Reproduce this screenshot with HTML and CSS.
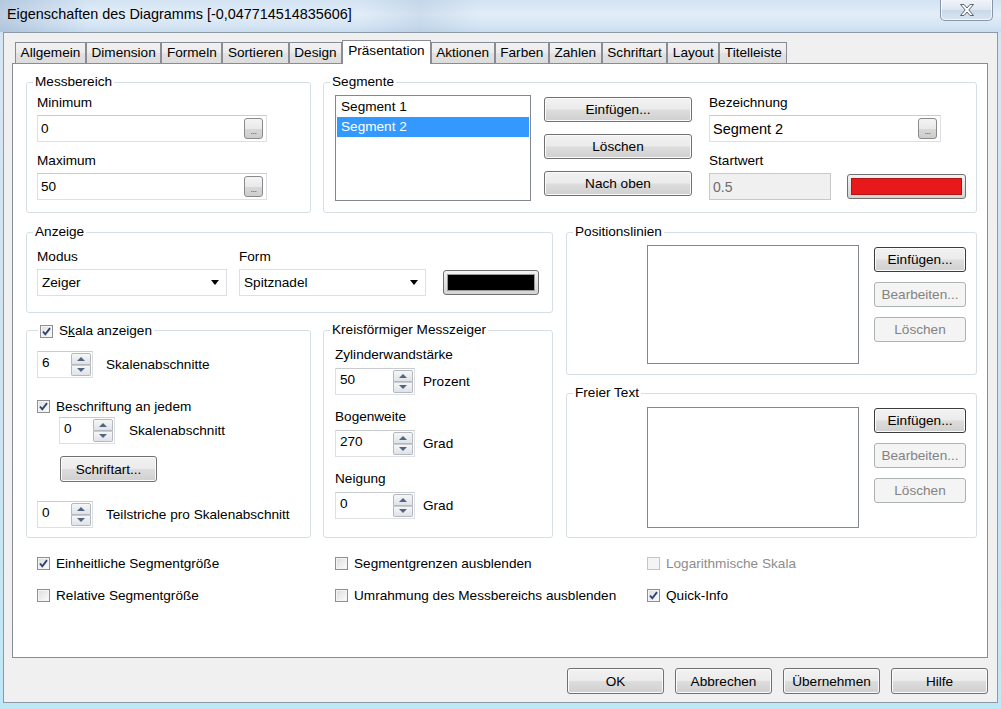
FILE: index.html
```html
<!DOCTYPE html>
<html lang="de">
<head>
<meta charset="utf-8">
<title>Eigenschaften des Diagramms</title>
<link rel="stylesheet" href="styles.css">
</head>
<body>
<div class="window">
  <div class="titlebar">
    <span class="title">Eigenschaften des Diagramms [-0,047714514835606]</span>
    <div class="close">
      <svg width="16" height="12" viewBox="0 0 16 12"><path d="M1.5 0.5 H5 L8 4 L11 0.5 H14.5 L9.8 6 L14.5 11.5 H11 L8 8 L5 11.5 H1.5 L6.2 6 Z" fill="#fff" stroke="#5a6470" stroke-width="1" stroke-linejoin="round"/></svg>
    </div>
  </div>
  <div class="dialog">
    <div class="tabs">
      <div class="tab">Allgemein</div>
      <div class="tab">Dimension</div>
      <div class="tab">Formeln</div>
      <div class="tab">Sortieren</div>
      <div class="tab">Design</div>
      <div class="tab active">Präsentation</div>
      <div class="tab">Aktionen</div>
      <div class="tab">Farben</div>
      <div class="tab">Zahlen</div>
      <div class="tab">Schriftart</div>
      <div class="tab">Layout</div>
      <div class="tab">Titelleiste</div>
    </div>
    <div class="page">
      <div class="row1">
        <div class="group g-mess">
          <div class="legend">Messbereich</div>
          <div class="lbl">Minimum</div>
          <div class="field f-mess"><span>0</span><span class="dots">...</span></div>
          <div class="lbl">Maximum</div>
          <div class="field f-mess"><span>50</span><span class="dots">...</span></div>
        </div>
        <div class="group g-seg">
          <div class="legend">Segmente</div>
          <div class="listbox lb-seg">
            <div class="item">Segment 1</div>
            <div class="item sel">Segment 2</div>
          </div>
          <div class="btncol seg-btns">
            <div class="btn">Einfügen...</div>
            <div class="btn">Löschen</div>
            <div class="btn">Nach oben</div>
          </div>
          <div class="seg-props">
            <div class="lbl">Bezeichnung</div>
            <div class="field f-bez"><span>Segment 2</span><span class="dots">...</span></div>
            <div class="lbl">Startwert</div>
            <div class="start-row">
              <div class="field f-start disabled"><span>0.5</span></div>
              <div class="colorbox red"><div class="swatch"></div></div>
            </div>
          </div>
        </div>
      </div>
      <div class="row2">
        <div class="leftcol">
          <div class="group g-anz">
            <div class="legend">Anzeige</div>
            <div class="anz-row">
              <div class="anz-col">
                <div class="lbl">Modus</div>
                <div class="select s-modus"><span>Zeiger</span><span class="arrow"></span></div>
              </div>
              <div class="anz-col form-col">
                <div class="lbl">Form</div>
                <div class="select s-form"><span>Spitznadel</span><span class="arrow"></span></div>
              </div>
              <div class="colorbox black"><div class="swatch"></div></div>
            </div>
          </div>
          <div class="pair">
            <div class="group g-skala">
              <div class="legend legend-cb">
                <span class="cb checked"><svg viewBox="0 0 13 13"><path d="M3 6.5 L5.3 9.3 L10 3.2" fill="none" stroke="#2c4374" stroke-width="1.9"/></svg></span>
                <span>S<u>k</u>ala anzeigen</span>
              </div>
              <div class="hrow">
                <div class="spin sp-s"><span class="val">6</span><span class="arrows"><span class="ab up"></span><span class="ab down"></span></span></div>
                <span class="unit u-s">Skalenabschnitte</span>
              </div>
              <div class="cbrow cb-besch">
                <span class="cb checked"><svg viewBox="0 0 13 13"><path d="M3 6.5 L5.3 9.3 L10 3.2" fill="none" stroke="#2c4374" stroke-width="1.9"/></svg></span>
                <span>Beschriftung an jedem</span>
              </div>
              <div class="hrow indent">
                <div class="spin sp-s"><span class="val">0</span><span class="arrows"><span class="ab up"></span><span class="ab down"></span></span></div>
                <span class="unit u-s2">Skalenabschnitt</span>
              </div>
              <div class="btn b-schrift">Schriftart...</div>
              <div class="hrow last">
                <div class="spin sp-s"><span class="val">0</span><span class="arrows"><span class="ab up"></span><span class="ab down"></span></span></div>
                <span class="unit u-s">Teilstriche pro Skalenabschnitt</span>
              </div>
            </div>
            <div class="group g-kreis">
              <div class="legend">Kreisförmiger Messzeiger</div>
              <div class="lbl">Zylinderwandstärke</div>
              <div class="hrow">
                <div class="spin sp-k"><span class="val">50</span><span class="arrows"><span class="ab up"></span><span class="ab down"></span></span></div>
                <span class="unit u-k">Prozent</span>
              </div>
              <div class="lbl">Bogenweite</div>
              <div class="hrow">
                <div class="spin sp-k"><span class="val">270</span><span class="arrows"><span class="ab up"></span><span class="ab down"></span></span></div>
                <span class="unit u-k">Grad</span>
              </div>
              <div class="lbl">Neigung</div>
              <div class="hrow">
                <div class="spin sp-k"><span class="val">0</span><span class="arrows"><span class="ab up"></span><span class="ab down"></span></span></div>
                <span class="unit u-k">Grad</span>
              </div>
            </div>
          </div>
        </div>
        <div class="rightcol">
          <div class="group g-pos">
            <div class="legend">Positionslinien</div>
            <div class="listbox lb-pos"></div>
            <div class="btncol side-btns">
              <div class="btn dark">Einfügen...</div>
              <div class="btn disabled">Bearbeiten...</div>
              <div class="btn disabled">Löschen</div>
            </div>
          </div>
          <div class="group g-frei">
            <div class="legend">Freier Text</div>
            <div class="listbox lb-frei"></div>
            <div class="btncol side-btns">
              <div class="btn dark">Einfügen...</div>
              <div class="btn disabled">Bearbeiten...</div>
              <div class="btn disabled">Löschen</div>
            </div>
          </div>
        </div>
      </div>
      <div class="checks">
        <div class="cbrow"><span class="cb checked"><svg viewBox="0 0 13 13"><path d="M3 6.5 L5.3 9.3 L10 3.2" fill="none" stroke="#2c4374" stroke-width="1.9"/></svg></span><span>Einheitliche Segmentgröße</span></div>
        <div class="cbrow"><span class="cb"></span><span>Segmentgrenzen ausblenden</span></div>
        <div class="cbrow off"><span class="cb"></span><span>Logarithmische Skala</span></div>
        <div class="cbrow"><span class="cb"></span><span>Relative Segmentgröße</span></div>
        <div class="cbrow"><span class="cb"></span><span>Umrahmung des Messbereichs ausblenden</span></div>
        <div class="cbrow"><span class="cb checked"><svg viewBox="0 0 13 13"><path d="M3 6.5 L5.3 9.3 L10 3.2" fill="none" stroke="#2c4374" stroke-width="1.9"/></svg></span><span>Quick-Info</span></div>
      </div>
    </div>
    <div class="footer">
      <div class="btn fbtn">OK</div>
      <div class="btn fbtn">Abbrechen</div>
      <div class="btn fbtn">Übernehmen</div>
      <div class="btn fbtn">Hilfe</div>
    </div>
  </div>
</div>
</body>
</html>
```

FILE: styles.css
```css
* { box-sizing: border-box; }
html, body { margin: 0; padding: 0; }
body {
  width: 1001px;
  height: 709px;
  overflow: hidden;
  font-family: "Liberation Sans", Arial, sans-serif;
  font-size: 13.6px;
  color: #000;
  background: linear-gradient(to bottom, #c4d8ec 0px, #d6e5f3 40px, #cfe3f1 400px, #bfe8f6 709px);
}
.window {
  width: 1001px;
  height: 709px;
  display: flex;
  flex-direction: column;
}
.titlebar {
  height: 32px;
  position: relative;
  display: flex;
  align-items: flex-start;
  background:
    linear-gradient(to right, rgba(120,150,185,0.35) 0px, rgba(255,255,255,0) 90px, rgba(255,255,255,0) 360px, rgba(150,175,205,0.25) 420px, rgba(255,255,255,0) 480px),
    linear-gradient(to bottom, #d3e3f2 0%, #e2edf8 45%, #d5e5f4 80%, #c8dcef 100%);
}
.title {
  margin: 6px 0 0 7px;
  font-size: 14.4px;
  line-height: 17px;
  color: #000;
  white-space: nowrap;
}
.close {
  position: absolute;
  left: 940px;
  top: -1px;
  width: 53px;
  height: 22px;
  border: 1px solid #8696a8;
  border-top: none;
  border-radius: 0 0 5px 5px;
  background: linear-gradient(to bottom, #f2f6fa 0%, #dde7f1 50%, #c9d8e7 51%, #d9e5f0 100%);
  box-shadow: inset 0 0 0 1px rgba(255,255,255,0.7);
  display: flex;
  align-items: center;
  justify-content: center;
}
.dialog {
  margin-left: 3px;
  width: 995px;
  height: 671px;
  border: 1px solid #8c99a6;
  background: #f0f0f0;
  padding: 7px 0 0 8px;
}
.tabs {
  height: 23px;
  display: flex;
  align-items: flex-end;
  padding-left: 3px;
}
.tab {
  height: 21px;
  border: 1px solid #898c95;
  border-bottom: none;
  padding: 0 4.6px;
  line-height: 19px;
  white-space: nowrap;
  background: linear-gradient(to bottom, #f2f2f2 0%, #ebebeb 50%, #e2e2e2 51%, #dcdcdc 100%);
}
.tab.active {
  height: 24px;
  margin-bottom: -1px;
  position: relative;
  z-index: 1;
  background: #fff;
  padding: 0 5px;
}
.page {
  width: 976px;
  height: 595px;
  border: 1px solid #898c95;
  background: #fff;
  padding: 18px 0 0 13px;
}

/* generic */
.group {
  position: relative;
  border: 1px solid #d5dfe5;
  border-radius: 3px;
}
.legend {
  position: absolute;
  top: -9px;
  left: 6px;
  padding: 0 2px;
  line-height: 16px;
  background: #fff;
  white-space: nowrap;
}
.lbl {
  height: 16px;
  line-height: 16px;
  white-space: nowrap;
}
.field {
  height: 27px;
  display: flex;
  align-items: center;
  justify-content: space-between;
  padding-left: 3px;
  border: 1px solid #dcdfe3;
  border-top-color: #c8cbd0;
  background: #fff;
}
.field.disabled {
  background: #f0f0f0;
  color: #6d6d6d;
  border-color: #c9c9c9;
}
.dots {
  width: 19px;
  height: 21px;
  margin-right: 3px;
  border: 1px solid #8a8a8a;
  border-radius: 3px;
  background: linear-gradient(to bottom, #f4f4f4 0%, #e9e9e9 50%, #d9d9d9 51%, #cdcdcd 100%);
  font-size: 9px;
  line-height: 19px;
  color: #555;
  text-align: center;
  letter-spacing: -0.5px;
  padding-top: 3px;
}
.btn {
  height: 25px;
  border: 1px solid #707070;
  border-radius: 3px;
  background: linear-gradient(to bottom, #f2f2f2 0%, #ebebeb 48%, #dddddd 52%, #cfcfcf 100%);
  box-shadow: inset 0 0 0 1px #fbfbfb;
  display: flex;
  align-items: center;
  justify-content: center;
  white-space: nowrap;
}
.btn.dark { border-color: #3c3c3c; }
.btn.disabled {
  border-color: #adb2b5;
  background: #f4f4f4;
  box-shadow: none;
  color: #838383;
}
.btncol { display: flex; flex-direction: column; }
.listbox {
  border: 1px solid #828790;
  background: #fff;
  padding: 1px;
}
.item {
  height: 20px;
  line-height: 20px;
  padding-left: 4px;
}
.item.sel { background: #3399ff; color: #fff; }
.colorbox {
  border: 1px solid #707070;
  border-radius: 3px;
  padding: 3px;
  background: linear-gradient(to bottom, #f2f2f2, #d4d4d4);
}
.colorbox .swatch { width: 100%; height: 100%; border: 1px solid #9a9a9a; }
.colorbox.red .swatch { background: #e8191a; border-color: #b01313; }
.colorbox.black .swatch { background: #000; }

/* checkbox */
.cb {
  width: 13px;
  height: 13px;
  flex: none;
  border: 1px solid #8e8f8f;
  background: linear-gradient(135deg, #dcdcdc 0%, #f0f0f0 60%, #fdfdfd 100%);
  box-shadow: inset 0 0 0 1px #f4f4f4;
  display: inline-flex;
  position: relative;
}
.cb svg { position: absolute; left: -1px; top: -1px; width: 13px; height: 13px; }
.cbrow {
  display: flex;
  align-items: center;
  gap: 6px;
  height: 16px;
  white-space: nowrap;
}
.cbrow.off { color: #8d8d8d; }
.cbrow.off .cb { border-color: #c5c5c5; background: #f4f4f4; }

/* spin */
.spin {
  height: 27px;
  display: flex;
  border: 1px solid #dcdfe3;
  border-top-color: #c8cbd0;
  background: #fff;
}
.spin .val { flex: 1; padding: 3px 0 0 4px; line-height: 16px; }
.spin .arrows {
  width: 20px;
  margin: 1px 1px 1px 0;
  display: flex;
  flex-direction: column;
}
.ab {
  flex: 1;
  border: 1px solid #b5b9bf;
  background: linear-gradient(to bottom, #f6f6f6, #dfe3e8);
  position: relative;
}
.ab.up { border-radius: 2px 2px 0 0; }
.ab.down { border-radius: 0 0 2px 2px; border-top-color: #c9ccd1; }
.ab::after {
  content: "";
  position: absolute;
  left: 50%;
  top: 50%;
  margin: -2px 0 0 -4px;
  border-left: 4px solid transparent;
  border-right: 4px solid transparent;
}
.ab.up::after { border-bottom: 4px solid #52657e; }
.ab.down::after { border-top: 4px solid #52657e; }
.sp-s { width: 56px; }
.sp-k { width: 80px; }
.hrow { display: flex; align-items: center; white-space: nowrap; }
.unit { white-space: nowrap; }
.u-s { margin-left: 13px; }
.u-s2 { margin-left: 14px; }
.u-k { margin-left: 8px; }

/* select */
.select {
  height: 27px;
  display: flex;
  align-items: center;
  justify-content: space-between;
  padding: 0 7px 0 4px;
  border: 1px solid #dcdfe3;
  background: #fff;
}
.arrow {
  width: 0;
  height: 0;
  border-left: 4px solid transparent;
  border-right: 4px solid transparent;
  border-top: 5px solid #000;
}

/* row 1 */
.row1 { display: flex; gap: 12px; height: 131px; }
.g-mess { width: 285px; padding: 12px 0 0 10px; }
.g-mess .lbl { margin-bottom: 4px; }
.f-mess { width: 230px; margin-bottom: 11px; }
.g-seg { width: 654px; padding: 12px 0 0 11px; display: flex; align-items: flex-start; }
.lb-seg { width: 196px; height: 106px; }
.seg-btns { margin-left: 13px; padding-top: 2px; gap: 12px; }
.seg-btns .btn { width: 148px; }
.seg-props { margin-left: 17px; }
.seg-props .lbl { margin-bottom: 4px; }
.f-bez { width: 232px; margin-bottom: 11px; font-size: 14.5px; }
.f-bez .dots { font-size: 9px; }
.start-row { display: flex; align-items: flex-start; }
.f-start { width: 122px; font-size: 14px; }
.colorbox.red { width: 119px; height: 25px; margin: 1px 0 0 16px; }

/* row 2 */
.row2 { display: flex; gap: 13px; margin-top: 19px; }
.leftcol { width: 527px; }
.rightcol { width: 411px; }
.g-anz { height: 81px; padding: 16px 0 0 10px; }
.anz-row { display: flex; align-items: flex-end; }
.anz-col .lbl { margin-bottom: 4px; }
.s-modus { width: 190px; }
.form-col { margin-left: 12px; }
.s-form { width: 187px; }
.colorbox.black { width: 96px; height: 25px; margin: 0 0 1px 17px; }
.pair { display: flex; gap: 12px; margin-top: 17px; }
.g-skala { width: 285px; height: 208px; padding: 20px 0 0 10px; }
.legend-cb { left: 11px; top: -8px; display: flex; align-items: center; gap: 6px; }
.cb-besch { margin-top: 20px; }
.hrow.indent { margin: 3px 0 0 22px; }
.b-schrift { width: 97px; height: 26px; margin: 12px 0 0 23px; }
.hrow.last { margin-top: 19px; }
.g-kreis { width: 230px; height: 208px; padding: 16px 0 0 11px; }
.g-kreis .lbl { margin-bottom: 5px; }
.g-kreis .hrow { margin-bottom: 14px; }
.g-pos { height: 143px; padding: 12px 0 0 80px; display: flex; align-items: flex-start; }
.g-frei { height: 145px; margin-top: 18px; padding: 13px 0 0 80px; display: flex; align-items: flex-start; }
.lb-pos { width: 212px; height: 119px; }
.lb-frei { width: 212px; height: 121px; }
.side-btns { margin-left: 15px; padding-top: 2px; gap: 10px; }
.g-frei .side-btns { padding-top: 1px; }
.side-btns .btn { width: 92px; }

/* checks */
.checks {
  display: grid;
  grid-template-columns: 298px 312px 200px;
  row-gap: 16px;
  margin-top: 17px;
  padding-left: 11px;
}
.footer {
  display: flex;
  justify-content: flex-end;
  gap: 11px;
  margin-top: 10px;
  padding-right: 9px;
}
.fbtn { width: 97px; height: 26px; }
```
